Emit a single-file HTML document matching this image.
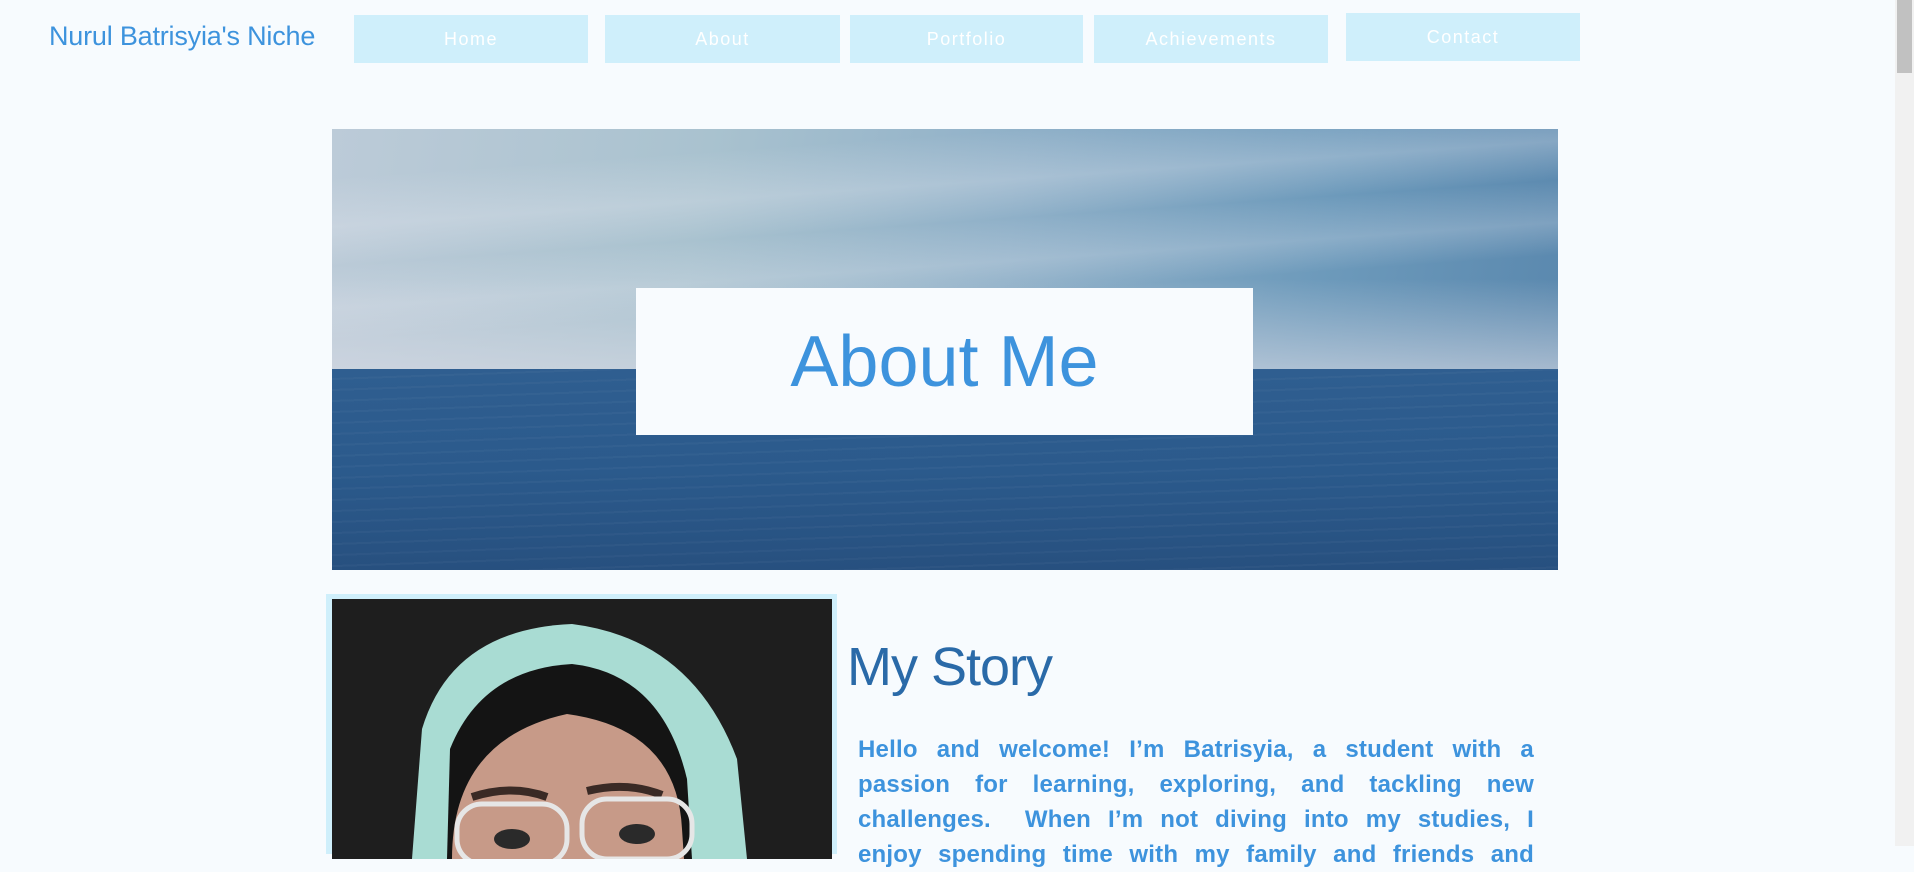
<!DOCTYPE html>
<html><head><meta charset="utf-8"><style>
*{margin:0;padding:0;box-sizing:border-box}
html,body{width:1914px;height:846px;overflow:hidden;background:#f7fbfe;font-family:"Liberation Sans",sans-serif}
.logo{position:absolute;left:49px;top:21px;font-size:27px;color:#3d93dd;letter-spacing:-0.2px}
.nav{position:absolute;height:48px;background:#cfeffb;color:#fff;font-size:18px;letter-spacing:1.5px;display:flex;align-items:center;justify-content:center}
.sb{position:absolute;left:1895px;top:0;width:19px;height:846px;background:#f1f1f1}
.sb div{position:absolute;left:2px;top:0;width:15px;height:73px;background:#c1c1c1}
.hero{position:absolute;left:332px;top:129px;width:1226px;height:441px;overflow:hidden}
.sky{position:absolute;left:0;top:0;width:100%;height:240px;background:linear-gradient(100deg,#bccbd8 0%,#a9c2cf 30%,#8fb0c8 55%,#6d9abb 80%,#5a88ae 100%)}
.sky:before{content:"";position:absolute;left:0;right:0;top:0;height:240px;background:linear-gradient(176deg,rgba(230,232,240,0) 15%,rgba(230,232,240,.3) 30%,rgba(230,232,240,0) 42%,rgba(230,232,240,.25) 55%,rgba(230,232,240,0) 65%)}
.sky:after{content:"";position:absolute;left:0;right:0;top:150px;height:90px;background:linear-gradient(180deg,rgba(215,218,228,0) 0%,rgba(215,218,228,.6) 100%)}
.sea{position:absolute;left:0;top:240px;width:100%;height:201px;background:repeating-linear-gradient(178deg,rgba(255,255,255,0) 0 9px,rgba(255,255,255,.03) 9px 11px),linear-gradient(180deg,#2f5e90 0%,#2b5a8c 50%,#27507f 100%)}
.box{position:absolute;left:636px;top:288px;width:617px;height:147px;background:#f8fbfe;display:flex;align-items:center;justify-content:center;font-size:72px;color:#3d93dd}
.frame{position:absolute;left:326px;top:594px;width:511px;height:260px;background:#cfeffb}
.photo{position:absolute;left:332px;top:599px;width:500px;height:260px;background:#1d1d1d;overflow:hidden}
h2{position:absolute;left:847px;top:636px;font-weight:normal;font-size:54px;color:#2a6aa8;letter-spacing:-1px}
.p{position:absolute;left:858px;top:732px;width:676px;font-size:24px;line-height:35px;color:#3d93dd;font-weight:bold;letter-spacing:0.2px}
.p div{text-align:justify;text-align-last:justify;white-space:nowrap;height:35px}
</style></head><body>
<div class="logo">Nurul Batrisyia's Niche</div>
<div class="nav" style="left:354px;top:15px;width:234px">Home</div>
<div class="nav" style="left:605px;top:15px;width:235px">About</div>
<div class="nav" style="left:850px;top:15px;width:233px">Portfolio</div>
<div class="nav" style="left:1094px;top:15px;width:234px">Achievements</div>
<div class="nav" style="left:1346px;top:13px;width:234px">Contact</div>
<div class="sb"><div></div></div>
<div class="hero"><div class="sky"></div><div class="sea"></div></div>
<div class="box">About Me</div>
<div class="frame"></div>
<div class="photo">
<svg width="500" height="260" viewBox="0 0 500 260">
<rect width="500" height="260" fill="#1e1e1e"/>
<path d="M80 260 L90 130 Q120 30 240 25 Q360 40 405 160 L415 260 Z" fill="#a9dcd3"/>
<path d="M115 260 L118 150 Q150 70 240 65 Q330 75 355 180 L360 260 Z" fill="#141414"/>
<path d="M120 260 Q120 140 235 115 Q345 130 350 230 L352 260 Z" fill="#c79a88"/>
<path d="M140 198 Q180 185 215 198" stroke="#3a2a25" stroke-width="8" fill="none"/>
<path d="M255 192 Q295 182 330 196" stroke="#3a2a25" stroke-width="8" fill="none"/>
<rect x="125" y="205" width="110" height="60" rx="25" fill="none" stroke="#e6e6e6" stroke-width="5"/>
<rect x="250" y="200" width="110" height="60" rx="25" fill="none" stroke="#e6e6e6" stroke-width="5"/>
<ellipse cx="180" cy="240" rx="18" ry="10" fill="#2a2a2a"/><ellipse cx="305" cy="235" rx="18" ry="10" fill="#2a2a2a"/>
</svg></div>
<h2>My Story</h2>
<div class="p">
<div>Hello and welcome! I’m <span style="font-weight:900">Batrisyia</span>, a student with a</div>
<div>passion for learning, exploring, and tackling new</div>
<div>challenges. &nbsp;When I’m not diving into my studies, I</div>
<div>enjoy spending time with my family and friends and</div>
</div>
</body></html>
